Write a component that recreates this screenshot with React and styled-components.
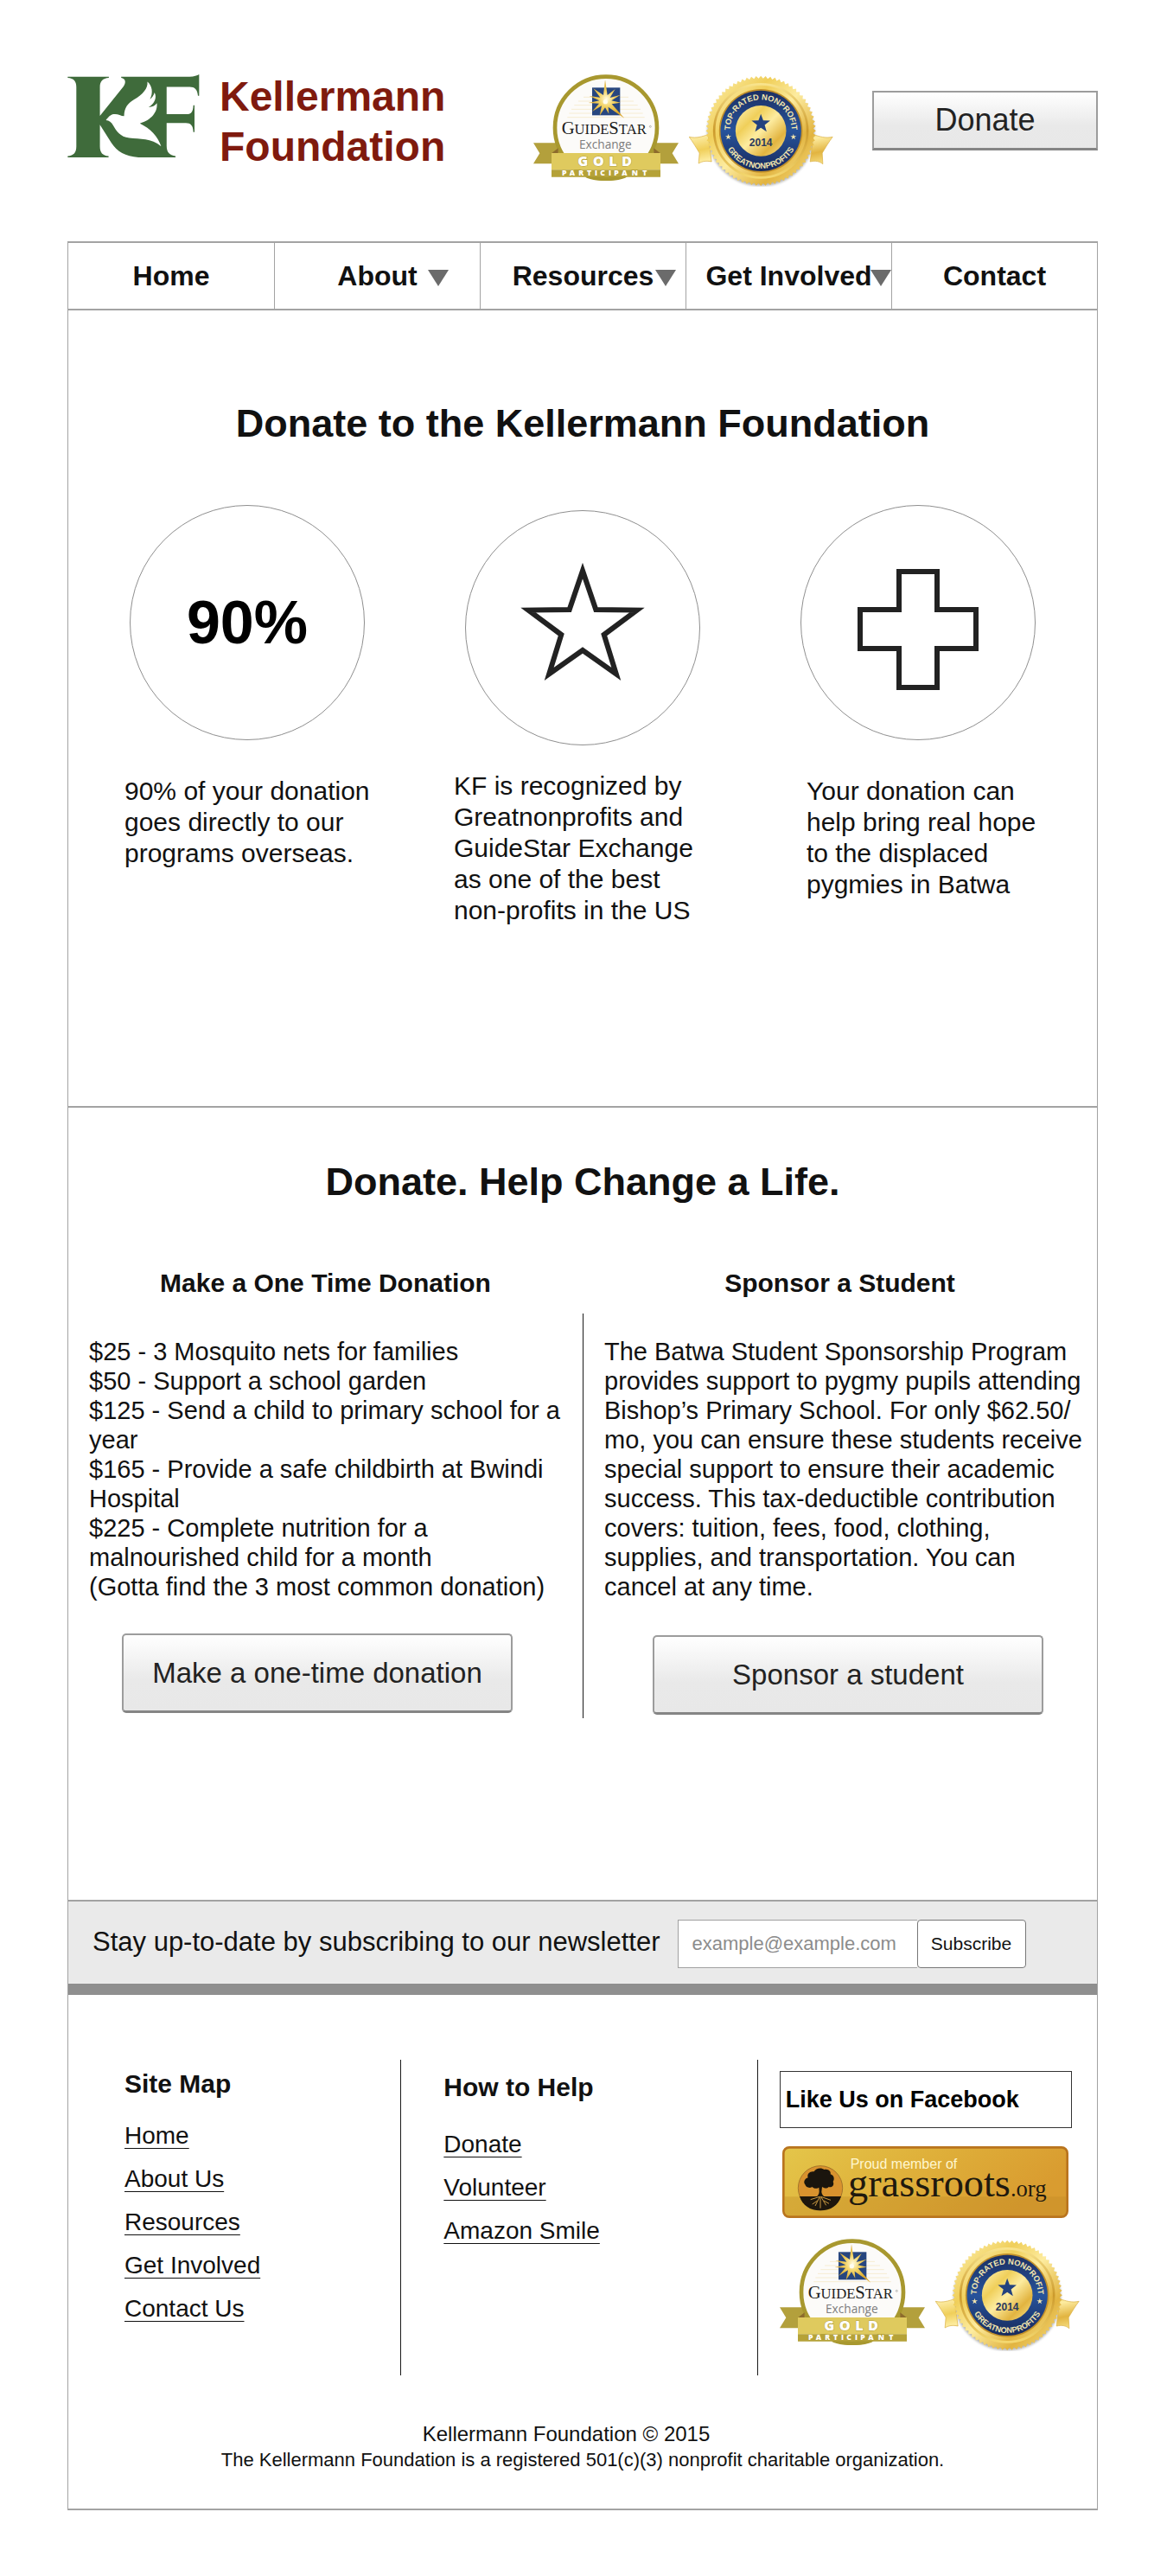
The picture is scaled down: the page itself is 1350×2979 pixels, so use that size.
import React, { useId } from "react";
import styled, { createGlobalStyle } from "styled-components";

const SANS = '"Liberation Sans", Arial, sans-serif';
const SERIF = '"Liberation Serif", "Times New Roman", serif';
const LINE = "#a3a3a3";
const RULE = "#1a1a1a";

const GlobalStyle = createGlobalStyle`
  *, *::before, *::after { box-sizing: border-box; }
  body { margin: 0; background: #fff; color: #111; font-family: ${SANS}; }
  h1, h2, h3, p, ul { margin: 0; padding: 0; }
  ul { list-style: none; }
  svg { display: block; flex: none; }
`;

const Page = styled.div`
  padding: 83px 80px 76px 78px;
`;

const Header = styled.header`
  display: flex;
  align-items: flex-start;
  padding-bottom: 63px;
`;

const Brand = styled.a`
  display: flex;
  gap: 23px;
  color: #7f1a0e;
  text-decoration: none;
  svg { margin-top: 3px; }
`;

const BrandName = styled.span`
  font-size: 48px;
  line-height: 58px;
  font-weight: bold;
`;

const Badges = styled.div`
  display: flex;
  gap: 12px;
`;

const HeaderBadges = styled(Badges)`
  margin: 3px 45px 0 auto;
`;

const Button = styled.button`
  font-family: ${SANS};
  color: #222;
  background: linear-gradient(#fff, #e9e9e9 60%, #e8e8e8);
  border: 2px solid #9c9c9c;
  border-bottom: 3px solid #858585;
  padding: 0;
  cursor: pointer;
`;

const HeaderButton = styled(Button)`
  margin-top: 22px;
  width: 261px;
  height: 69px;
  font-size: 36px;
`;

const ActionButton = styled(Button)`
  display: block;
  width: 452px;
  height: 92px;
  margin: ${(p) => p.$margin};
  border-radius: 5px;
  font-size: 33px;
`;

const Frame = styled.div`
  border: 2px solid ${LINE};
  border-width: 2px 1px;
`;

const Nav = styled.nav`
  display: grid;
  grid-template-columns: repeat(5, 1fr);
  border-bottom: 2px solid ${LINE};
`;

const NavLink = styled.a`
  display: flex;
  justify-content: center;
  align-items: center;
  height: 76px;
  color: #111;
  font-size: 32px;
  font-weight: bold;
  text-decoration: none;
  white-space: nowrap;
  & + & { border-left: 1px solid ${LINE}; }
`;

/* The negative margin keeps the label centred whether or not it has a caret. */
const Caret = styled.span`
  border: 12px solid transparent;
  border-top: 19px solid #6b6b6b;
  border-bottom: 0;
  margin: 4px ${(p) => -24 - p.$gap}px 0 ${(p) => p.$gap}px;
`;

const Intro = styled.section`
  padding: 104px 13px 208px;
  border-bottom: 2px solid ${LINE};
`;

const Title = styled.h1`
  font-size: 45px;
  line-height: 54px;
  text-align: center;
`;

const Features = styled.div`
  display: grid;
  grid-template-columns: repeat(3, 1fr);
  margin-top: 67px;
`;

const Feature = styled.div`
  padding-top: ${(p) => (p.$lowered ? 6 : 0)}px;
`;

const Disc = styled.div`
  display: flex;
  align-items: center;
  justify-content: center;
  width: 272px;
  height: 272px;
  margin: 0 auto;
  border: 1px solid #8f8f8f;
  border-radius: 50%;
  font-size: 70px;
  font-weight: bold;
  color: #000;
`;

const FeatureText = styled.p`
  max-width: 290px;
  margin: ${(p) => p.$top}px 0 0 ${(p) => p.$indent}px;
  font-size: 30px;
  line-height: 36px;
`;

const Give = styled.section`
  padding: 59px 0 210px;
`;

const GiveTitles = styled.div`
  display: grid;
  grid-template-columns: 1fr 1fr;
  margin: 72px 0 17px;
`;

const SubTitle = styled.h3`
  font-size: 30px;
  line-height: 36px;
  text-align: center;
`;

const GiveColumns = styled.div`
  display: grid;
  grid-template-columns: 1fr 1fr;
`;

const GiveColumn = styled.div`
  padding: 27px 10px 4px 24px;
  font-size: 29px;
  line-height: 34px;
  & + & { border-left: 1px solid ${RULE}; }
`;

const Newsletter = styled.form`
  display: flex;
  align-items: flex-start;
  padding: 21px 28px 18px;
  background: #eaeaea;
  border-top: 2px solid #a2a2a2;
  border-bottom: 13px solid #8f8f8f;
`;

const NewsletterLabel = styled.label`
  margin-right: 20px;
  font-size: 31px;
  line-height: 52px;
  white-space: nowrap;
`;

const EmailInput = styled.input`
  width: 277px;
  height: 56px;
  padding: 0 16px;
  border: 1px solid #a0a0a0;
  border-right: 0;
  background: #fff;
  font-family: ${SANS};
  font-size: 22px;
  &::placeholder { color: #8c8c8c; opacity: 1; }
`;

const SubscribeButton = styled.button`
  width: 126px;
  height: 56px;
  padding: 0;
  border: 1px solid #777;
  border-radius: 4px;
  background: #fff;
  color: #111;
  font-family: ${SANS};
  font-size: 21px;
`;

const Footer = styled.footer`
  padding: 75px 0 41px;
`;

const FooterColumns = styled.div`
  display: grid;
  grid-template-columns: 384fr 412fr 393fr;
`;

const FooterColumn = styled.div`
  padding: ${(p) => p.$padding};
  & + & { border-left: 1px solid ${RULE}; }
`;

const FooterTitle = styled.h3`
  margin-bottom: ${(p) => p.$space}px;
  font-size: 30px;
  line-height: 36px;
`;

const FooterLink = styled.a`
  color: #111;
  font-size: 28px;
  line-height: 50px;
  text-decoration: underline;
  text-decoration-thickness: 1px;
  text-underline-offset: 5px;
`;

const FacebookLink = styled.a`
  display: flex;
  align-items: center;
  width: 338px;
  height: 66px;
  padding: 0 6px;
  border: 1px solid #333;
  color: #000;
  font-size: 27px;
  font-weight: bold;
  text-decoration: none;
`;

const GrassrootsLink = styled.a`
  display: block;
  margin: 21px 3px 24px;
`;

const Legal = styled.div`
  margin-top: 53px;
  line-height: 30px;
  text-align: center;
`;

const Copyright = styled.p`
  padding-right: 38px;
  font-size: 24px;
`;

const Registration = styled.p`
  font-size: 22px;
`;

function Logo() {
  return (
    <svg width="153" height="96" viewBox="53 78 460 288" role="img" aria-label="KF">
      <path
        fill="#3f6b3b"
        d="M54 86H197V90C176 92 166 101 166 122V222L248 120C258 106 255 93 240 90V86H478C494 86 504 82 511 78V152H507C505 130 496 121 478 121H398V216H468C485 216 490 206 491 185H495V278H491C490 256 482 247 465 247H398V326C398 350 408 359 429 362V366H300C254 362 226 347 206 316L166 253V328C166 350 175 360 196 362V366H54V362C75 360 84 350 84 328V122C84 101 75 92 54 90Z"
      />
      <path
        fill="#fff"
        d="M187 237C194 228 201 218 214 216C228 214 238 222 250 223C251 194 262 180 284 166C316 146 334 126 331 103C348 116 352 142 340 164C346 160 353 152 356 141C366 160 354 182 335 192C348 192 358 187 364 178C368 208 344 238 305 248C342 266 368 294 379 328C344 298 306 304 268 299C236 294 224 276 212 255C206 244 198 238 187 237Z"
      />
    </svg>
  );
}

function starPoints(cx, cy, outer, inner, count) {
  const points = [];
  for (let i = 0; i < count * 2; i += 1) {
    const r = i % 2 ? inner : outer;
    const a = (Math.PI * i) / count - Math.PI / 2;
    points.push(`${(cx + r * Math.cos(a)).toFixed(1)},${(cy + r * Math.sin(a)).toFixed(1)}`);
  }
  return points.join(" ");
}

function GuideStarBadge() {
  const id = useId();
  return (
    <svg width="168" height="130" viewBox="54 47 504 390" role="img" aria-label="GuideStar Exchange Gold Participant">
      <defs>
        <radialGradient id={id}>
          <stop offset="0" stopColor="#fffbe0" />
          <stop offset="0.4" stopColor="#f3d468" />
          <stop offset="1" stopColor="#d9a326" />
        </radialGradient>
      </defs>
      <path fill="#b3a03c" d="M54 285H150V357H54L76 321ZM558 285H462V357H558L536 321Z" />
      <circle cx="306" cy="232" r="177" fill="#fcfbf9" stroke="#a8982f" strokeWidth="14" />
      <path stroke="#f6ecd2" strokeWidth="3" d="M228 126H384M210 140H402M196 154H416M186 168H426M178 182H434M172 196H440" />
      <rect x="258" y="93" width="97" height="96" fill="#27467f" />
      <path
        fill={`url(#${id})`}
        d="M303 66L311 119L338 98L320 128L356 118L325 138L357 145L326 150L370 199L314 160L316 184L303 162L284 190L291 156L258 176L282 148L245 146L283 138L248 122L286 127L262 96L297 119Z"
      />
      <circle cx="304" cy="142" r="8" fill="#fffdf0" />
      <text x="152" y="255" fill="#1d1d1d" fontFamily={SERIF} fontSize="62">
        G<tspan fontSize="50">UIDE</tspan>S<tspan fontSize="50">TAR</tspan>
      </text>
      <circle cx="460" cy="228" r="3" fill="none" stroke="#444" />
      <text x="213" y="306" fill="#7d7d7d" fontFamily='"Open Sans", sans-serif' fontSize="41">Exchange</text>
      <path fill="#8d6b2c" d="M117 321L140 303V321ZM495 321L472 303V321Z" />
      <path fill="#dfca5e" d="M117 320H495V378H117Z" />
      <path fill="#b5a238" d="M117 378H495V403H117Z" />
      <path fill="#a8982f" d="M234 403H378C354 420 258 420 234 403Z" />
      <g fill="#fff" fontFamily='"Open Sans", sans-serif' fontWeight="800">
        <text x="208 260 316 360" y="366" fontSize="49" stroke="#b29c3c" strokeWidth="3" paintOrder="stroke">GOLD</text>
        <text x="153 179 211 240 267 286 315 334 361 395 433" y="399" fontSize="26">PARTICIPANT</text>
      </g>
    </svg>
  );
}

function NonprofitBadge() {
  const id = useId();
  return (
    <svg width="167" height="130" viewBox="594 47 500 390" role="img" aria-label="2014 Top-Rated Nonprofit, GreatNonprofits">
      <defs>
        <linearGradient id={`${id}g`} x1="0" y1="0" x2="1" y2="1">
          <stop offset="0" stopColor="#fff3b8" />
          <stop offset="0.3" stopColor="#f0cf5a" />
          <stop offset="0.5" stopColor="#fdeca0" />
          <stop offset="0.75" stopColor="#e2b440" />
          <stop offset="1" stopColor="#fae68e" />
        </linearGradient>
        <linearGradient id={`${id}r`} x1="0" y1="0" x2="0" y2="1">
          <stop offset="0" stopColor="#f8e38c" />
          <stop offset="0.5" stopColor="#cc9a2c" />
          <stop offset="1" stopColor="#f4d870" />
        </linearGradient>
        <linearGradient id={`${id}b`} x1="0" y1="0" x2="0" y2="1">
          <stop offset="0" stopColor="#1c2f63" />
          <stop offset="0.5" stopColor="#27539b" />
          <stop offset="1" stopColor="#182a5c" />
        </linearGradient>
        <filter id={`${id}s`} x="-20%" y="-20%" width="140%" height="140%">
          <feGaussianBlur stdDeviation="5" />
        </filter>
        <path id={`${id}t`} d="M736 242A107 107 0 0 1 950 242" />
        <path id={`${id}u`} d="M711 242A132 132 0 0 0 975 242" />
      </defs>
      <ellipse cx="843" cy="252" rx="186" ry="182" fill="#000" opacity="0.3" filter={`url(#${id}s)`} />
      <path fill={`url(#${id}g)`} stroke="#d8ac3c" strokeWidth="2" d="M594 264C620 270 640 262 660 256L672 350C654 346 640 348 627 356L630 320C618 300 606 280 594 264ZM1092 264C1066 270 1046 262 1026 256L1014 350C1032 346 1046 348 1058 358L1056 320C1068 300 1080 280 1092 264Z" />
      <polygon points={starPoints(843, 243, 191, 182, 72)} fill={`url(#${id}g)`} />
      <circle cx="843" cy="243" r="162" fill={`url(#${id}g)`} stroke={`url(#${id}r)`} strokeWidth="8" />
      <circle cx="843" cy="243" r="145" fill="#c3912a" />
      <circle cx="843" cy="243" r="140" fill={`url(#${id}b)`} />
      <circle cx="843" cy="243" r="88" fill={`url(#${id}g)`} />
      <polygon points={starPoints(843, 218, 34, 14, 5)} fill="#23427f" />
      <text x="843" y="296" textAnchor="middle" fill="#2b3a5e" fontFamily={SANS} fontWeight="bold" fontSize="36">2014</text>
      <g fill="#f3e6ae" fontFamily={SANS} fontWeight="bold" fontSize="28">
        <text textAnchor="middle"><textPath href={`#${id}t`} startOffset="50%">TOP-RATED NONPROFIT</textPath></text>
        <text textAnchor="middle"><textPath href={`#${id}u`} startOffset="50%">GREATNONPROFITS</textPath></text>
      </g>
      <polygon points={starPoints(730, 264, 11, 4, 5)} fill="#f3e6ae" />
      <polygon points={starPoints(956, 264, 11, 4, 5)} fill="#f3e6ae" />
    </svg>
  );
}

function GrassrootsBadge() {
  const id = useId();
  return (
    <svg width="331" height="83" viewBox="132 337 993 249" role="img" aria-label="Proud member of grassroots.org">
      <defs>
        <linearGradient id={id} x1="0" y1="0" x2="1" y2="0.3">
          <stop offset="0" stopColor="#e4c64a" />
          <stop offset="0.5" stopColor="#dfb03a" />
          <stop offset="1" stopColor="#d99c30" />
        </linearGradient>
      </defs>
      <rect x="136" y="341" width="985" height="241" rx="20" fill={`url(#${id})`} stroke="#b9741e" strokeWidth="8" />
      <path fill="#c08a26" opacity="0.35" d="M140 512H1117V562C1117 572 1110 578 1100 578H158C148 578 140 572 140 562Z" />
      <circle cx="264" cy="482" r="77" fill="#d9922e" stroke="#a4752a" strokeWidth="3" />
      <path fill="#1d160c" d="M192 511H336C326 542 300 560 264 560S202 542 192 511Z" />
      <path
        fill="#1a150d"
        d="M211 470C203 460 212 448 221 446C216 432 230 422 242 425C248 412 268 410 278 418C290 414 302 424 299 434C312 438 314 452 308 460C314 472 304 482 293 478C286 486 276 482 270 478L268 496C269 504 274 510 280 514H248C256 510 260 502 260 494L259 480C250 486 240 484 236 478C226 484 214 480 211 470Z"
      />
      <path fill="none" stroke="#c99842" strokeWidth="3" d="M262 512L230 522M262 512L246 544M264 512V552M266 512L284 542M266 512L300 524M254 526L236 538M276 526L294 536" />
      <text x="368" y="414" fill="#fff7cf" fontFamily={SANS} fontSize="48">Proud member of</text>
      <text x="360" y="512" fill="#1f190e" fontFamily={SERIF} fontSize="139">
        grassroots<tspan fontSize="80">.org</tspan>
      </text>
    </svg>
  );
}

function BadgePair() {
  return (
    <>
      <GuideStarBadge />
      <NonprofitBadge />
    </>
  );
}

const navItems = [
  { label: "Home" },
  { label: "About", gap: 12 },
  { label: "Resources", gap: 2 },
  { label: "Get Involved", gap: -2 },
  { label: "Contact" },
];

const gifts = [
  "$25 - 3 Mosquito nets for families",
  "$50 - Support a school garden",
  "$125 - Send a child to primary school for a year",
  "$165 - Provide a safe childbirth at Bwindi Hospital",
  "$225 - Complete nutrition for a malnourished child for a month",
  "(Gotta find the 3 most common donation)",
];

function LinkList({ items }) {
  return (
    <ul>
      {items.map((item) => (
        <li key={item}>
          <FooterLink href="#">{item}</FooterLink>
        </li>
      ))}
    </ul>
  );
}

export default function App() {
  return (
    <>
      <GlobalStyle />
      <Page>
        <Header>
          <Brand href="#">
            <Logo />
            <BrandName>
              Kellermann
              <br />
              Foundation
            </BrandName>
          </Brand>
          <HeaderBadges>
            <BadgePair />
          </HeaderBadges>
          <HeaderButton type="button">Donate</HeaderButton>
        </Header>

        <Frame>
          <Nav>
            {navItems.map(({ label, gap }) => (
              <NavLink href="#" key={label}>
                {label}
                {gap && <Caret $gap={gap} />}
              </NavLink>
            ))}
          </Nav>

          <Intro>
            <Title>Donate to the Kellermann Foundation</Title>
            <Features>
              <Feature>
                <Disc>90%</Disc>
                <FeatureText $top={41} $indent={52}>
                  90% of your donation goes directly to our programs overseas.
                </FeatureText>
              </Feature>
              <Feature $lowered>
                <Disc>
                  <svg width="152" height="152" viewBox="-76 -76 152 152" aria-hidden="true">
                    <polygon
                      points={starPoints(0, 0, 66, 26, 5)}
                      fill="none"
                      stroke="#222"
                      strokeWidth="6"
                      strokeMiterlimit="10"
                    />
                  </svg>
                </Disc>
                <FeatureText $top={29} $indent={45}>
                  KF is recognized by Greatnonprofits and GuideStar Exchange as one of the best
                  non-profits in the US
                </FeatureText>
              </Feature>
              <Feature>
                <Disc>
                  <svg width="140" height="156" viewBox="0 -16 140 156" aria-hidden="true">
                    <path
                      fill="none"
                      stroke="#222"
                      strokeWidth="6"
                      d="M48 3H92V47H137V92H92V137H48V92H3V47H48Z"
                    />
                  </svg>
                </Disc>
                <FeatureText $top={41} $indent={65}>
                  Your donation can help bring real hope to the displaced pygmies in Batwa
                </FeatureText>
              </Feature>
            </Features>
          </Intro>

          <Give>
            <Title as="h2">Donate. Help Change a Life.</Title>
            <GiveTitles>
              <SubTitle>Make a One Time Donation</SubTitle>
              <SubTitle>Sponsor a Student</SubTitle>
            </GiveTitles>
            <GiveColumns>
              <GiveColumn>
                <ul>
                  {gifts.map((gift) => (
                    <li key={gift}>{gift}</li>
                  ))}
                </ul>
                <ActionButton type="button" $margin="37px 0 0 38px">
                  Make a one-time donation
                </ActionButton>
              </GiveColumn>
              <GiveColumn>
                <p>
                  The Batwa Student Sponsorship Program provides support to pygmy pupils attending
                  Bishop’s Primary School. For only $62.50/
                  <wbr />
                  mo, you can ensure these students receive special support to ensure their academic
                  success. This tax-deductible contribution covers: tuition, fees, food, clothing,
                  supplies, and transportation. You can cancel at any time.
                </p>
                <ActionButton type="button" $margin="39px 0 0 56px">
                  Sponsor a student
                </ActionButton>
              </GiveColumn>
            </GiveColumns>
          </Give>

          <Newsletter onSubmit={(e) => e.preventDefault()}>
            <NewsletterLabel htmlFor="email">
              Stay up-to-date by subscribing to our newsletter
            </NewsletterLabel>
            <EmailInput id="email" type="email" placeholder="example@example.com" />
            <SubscribeButton type="submit">Subscribe</SubscribeButton>
          </Newsletter>

          <Footer>
            <FooterColumns>
              <FooterColumn $padding="10px 0 0 65px">
                <FooterTitle $space={17}>Site Map</FooterTitle>
                <LinkList items={["Home", "About Us", "Resources", "Get Involved", "Contact Us"]} />
              </FooterColumn>
              <FooterColumn $padding="14px 0 0 49px">
                <FooterTitle $space={23}>How to Help</FooterTitle>
                <LinkList items={["Donate", "Volunteer", "Amazon Smile"]} />
              </FooterColumn>
              <FooterColumn $padding="13px 0 28px 25px">
                <FacebookLink href="#">Like Us on Facebook</FacebookLink>
                <GrassrootsLink href="#">
                  <GrassrootsBadge />
                </GrassrootsLink>
                <Badges>
                  <BadgePair />
                </Badges>
              </FooterColumn>
            </FooterColumns>
            <Legal>
              <Copyright>Kellermann Foundation © 2015</Copyright>
              <Registration>
                The Kellermann Foundation is a registered 501(c)(3) nonprofit charitable
                organization.
              </Registration>
            </Legal>
          </Footer>
        </Frame>
      </Page>
    </>
  );
}
